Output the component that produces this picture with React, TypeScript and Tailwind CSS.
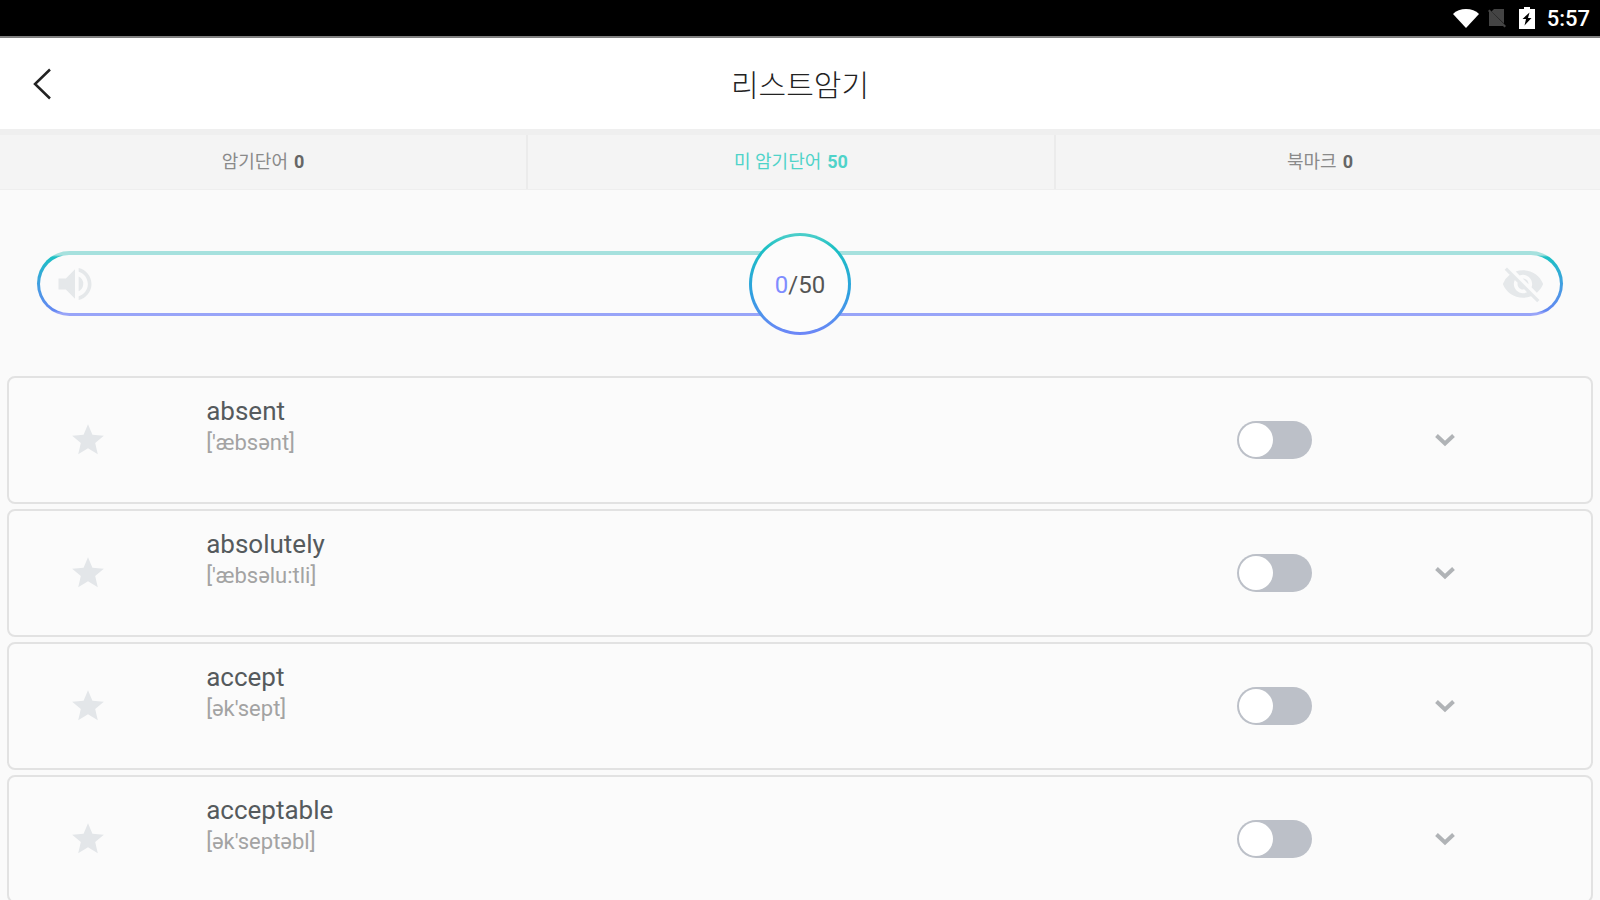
import React from 'react';
import { MdStar, MdVisibilityOff, MdVolumeUp } from 'react-icons/md';
import clsx from 'clsx';

interface Word {
    text: string;
    phonetic: string;
}

const words: Word[] = [
    { text: 'absent', phonetic: "['æbsənt]" },
    { text: 'absolutely', phonetic: "['æbsəlu:tli]" },
    { text: 'accept', phonetic: "[ək'sept]" },
    { text: 'acceptable', phonetic: "[ək'septəbl]" },
];

const tabs = [
    { id: 'known', label: '암기단어', count: 0 },
    { id: 'unknown', label: '미 암기단어', count: 50 },
    { id: 'bookmark', label: '북마크', count: 0 },
];

function StatusBar() {
    return (
        <div className="flex h-[38px] shrink-0 items-center justify-end border-b-2 border-[#808080] bg-black pr-[10px] text-white">
            <svg className="mr-2 h-[19px] w-[26px]" viewBox="0 0 26 19" fill="currentColor" aria-hidden="true">
                <path d="M0 5C3 1.600 8 0 13 0s10 1.600 13 5L13 19Z" />
            </svg>
            <svg className="mr-3 h-5 w-5 text-[#444]" viewBox="0 0 20 20" fill="currentColor" aria-hidden="true">
                <path d="M7 1h10v14.500L4.500 3.500Z" />
                <path d="M1 3l1.500-1.500L19 18l-1.500 1.500L16 18H2V4Z" />
            </svg>
            <svg className="mr-3 h-[22px] w-4" viewBox="0 0 16 22" aria-hidden="true">
                <path fill="currentColor" d="M5 0h6v2h5v20H0V2h5Z" />
                <path fill="#000" d="M10.500 5.500 3.500 12H7l-1.500 6.500L12.500 11H9Z" />
            </svg>
            <span className="pt-[2px] text-[22px] leading-6 font-medium">5:57</span>
        </div>
    );
}

function Header() {
    return (
        <header className="grid h-[91px] shrink-0 grid-cols-[80px_1fr_80px] items-center bg-white">
            <button type="button" aria-label="뒤로" className="flex h-full items-center pl-8">
                <svg className="h-8 w-5" viewBox="0 0 20 32" fill="none" stroke="#222" strokeWidth="2.5" aria-hidden="true">
                    <path d="M18 1.500 3 16l15 14.500" />
                </svg>
            </button>
            <h1 className="pt-1 text-center text-[30px] leading-9 font-light text-[#222]">리스트암기</h1>
        </header>
    );
}

function Tabs({ active, onChange }: { active: string; onChange: (id: string) => void }) {
    return (
        <nav className="flex h-[61px] shrink-0 border-t-[6px] border-b border-t-[#efefef] border-b-[#eeeeee] bg-[#f4f4f4]">
            {tabs.map((tab, index) => (
                <button
                    key={tab.id}
                    type="button"
                    onClick={() => onChange(tab.id)}
                    className={clsx(
                        'flex w-[33%] items-center justify-center gap-[6px] text-[18px] leading-6',
                        index < 2 && 'border-r-2 border-[#ebebeb]',
                        active === tab.id ? 'text-[#4fd3c9]' : 'text-[#8a8a8a]'
                    )}
                >
                    <span>{tab.label}</span>
                    <span className={clsx('font-bold', active !== tab.id && 'text-[#666]')}>{tab.count}</span>
                </button>
            ))}
        </nav>
    );
}

function ProgressBar({ done, total }: { done: number; total: number }) {
    return (
        <section className="relative mx-[37px] mt-[61px] shrink-0">
            <div className="rounded-full bg-[linear-gradient(to_bottom,#a6e1de_0,#a6e1de_4px,#1cc0c4_6px,#3f9fe0_50%,#6488f2_60px,#98a4f8_62px)] px-[3px] pt-1 pb-[3px]">
                <div className="flex h-[58px] items-center justify-between rounded-full bg-[#fbfbfb] pr-[15px] pl-[13px] text-[#e5e8ea]">
                    <button type="button" aria-label="발음 듣기">
                        <MdVolumeUp className="h-11 w-11" />
                    </button>
                    <button type="button" aria-label="뜻 가리기">
                        <MdVisibilityOff className="h-11 w-11" />
                    </button>
                </div>
            </div>
            {/* counter sits over the middle of the bar */}
            <div className="absolute inset-0 flex items-center justify-center">
                <div className="shrink-0 rounded-full bg-[linear-gradient(to_bottom,#4fcfca_0,#1cc0c4_15%,#2f9fe0_60%,#6e86f8_100%)] p-[3px]">
                    <div className="flex h-24 w-24 items-center justify-center rounded-full bg-[#fcfcfc] pt-[2px] text-[24px] leading-8 text-[#555]">
                        <span className="text-[#7f8cff]">{done}</span>/{total}
                    </div>
                </div>
            </div>
        </section>
    );
}

function WordCard({ word }: { word: Word }) {
    const [memorized, setMemorized] = React.useState(false);

    return (
        <li className="grid h-32 shrink-0 grid-cols-[20fr_130fr_20fr_23fr_7fr] items-center rounded-[8px] border-2 border-[#e2e2e2] bg-[#fbfbfb]">
            <button type="button" aria-label={`${word.text} 북마크`} className="justify-self-center text-[#e3e6e9]">
                <MdStar className="h-[38px] w-[38px]" />
            </button>
            <div className="self-start pt-[17px] pl-[39px]">
                <p className="text-[26px] leading-8 text-[#555a5d]">{word.text}</p>
                <p className="text-[22px] leading-8 text-[#a3a3a3]">{word.phonetic}</p>
            </div>
            <input
                type="checkbox"
                role="switch"
                aria-label={`${word.text} 암기 완료`}
                checked={memorized}
                onChange={(e) => setMemorized(e.target.checked)}
                className="h-[38px] w-[75px] appearance-none justify-self-center rounded-full bg-[#bcc0c8] p-[2px] before:block before:h-[34px] before:w-[34px] before:rounded-full before:bg-white checked:bg-[#4fd3c9] checked:before:ml-auto"
            />
            <button type="button" aria-label={`${word.text} 펼치기`} className="justify-self-center">
                <svg className="h-[14px] w-5" viewBox="0 0 20 14" fill="none" stroke="#b0b3b6" strokeWidth="4" aria-hidden="true">
                    <path d="M1.500 2.500 10 10.500l8.500-8" />
                </svg>
            </button>
        </li>
    );
}

export default function App() {
    const [active, setActive] = React.useState('unknown');

    return (
        <div className="flex h-screen flex-col overflow-hidden bg-[#fafafa] font-[Roboto,'Noto_Sans_CJK_KR',sans-serif]">
            <StatusBar />
            <Header />
            <Tabs active={active} onChange={setActive} />
            <ProgressBar done={0} total={50} />
            <ul className="mx-[7px] mt-[60px] flex min-h-0 flex-1 flex-col gap-[5px] overflow-hidden">
                {words.map((word) => (
                    <WordCard key={word.text} word={word} />
                ))}
            </ul>
        </div>
    );
}
